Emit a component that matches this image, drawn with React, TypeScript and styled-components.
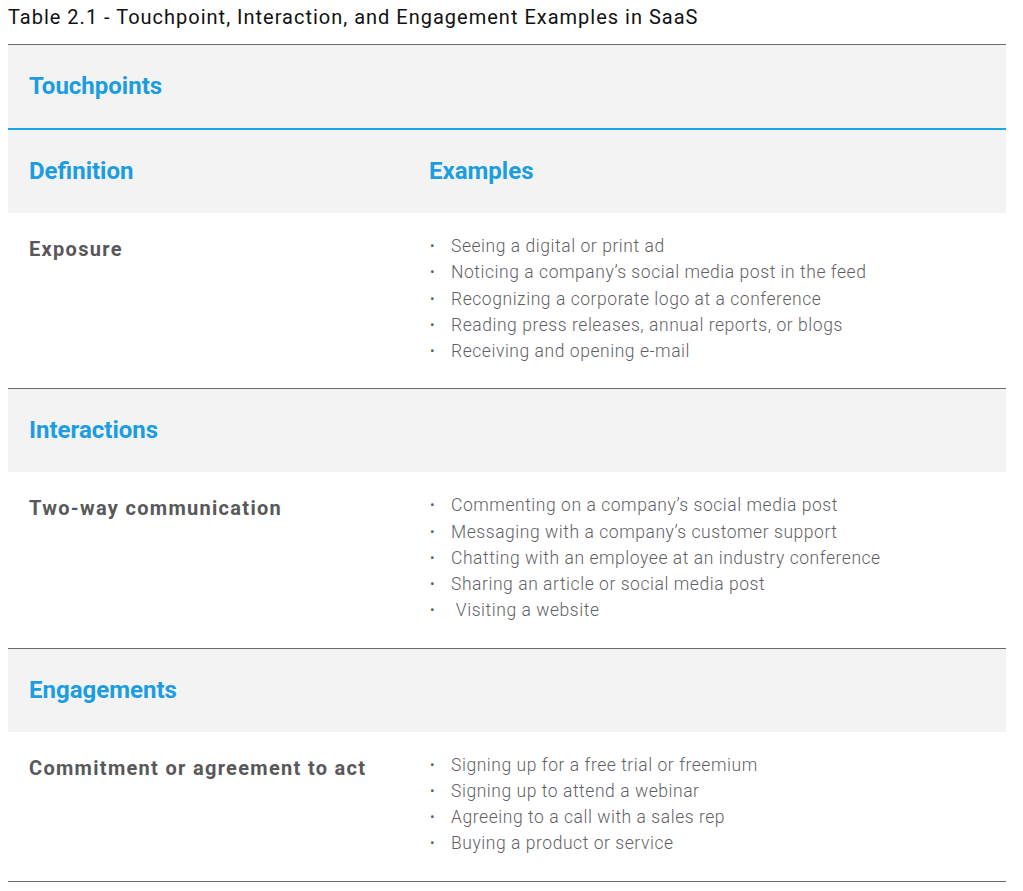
import React from "react";
import styled, { createGlobalStyle } from "styled-components";

const Global = createGlobalStyle`
  html, body { margin: 0; padding: 0; background: #ffffff; }
  body { font-family: Roboto, "Liberation Sans", sans-serif; }
`;

const Page = styled.div`
  padding: 5px 8px 0 8px;
  width: 998px;
`;

const Title = styled.h1`
  margin: 0 0 15px 0;
  font-family: Roboto, "Liberation Sans", sans-serif;
  font-weight: 400;
  font-size: 20px;
  line-height: 24px;
  letter-spacing: 1px;
  color: #111111;
`;

const Table = styled.div`
  display: flex;
  flex-direction: column;
  border-bottom: 1px solid #6a6a6a;
`;

const Section = styled.section`
  border-top: 1px solid #6a6a6a;
`;

const Band = styled.div<{ $accent?: boolean }>`
  display: grid;
  grid-template-columns: 400px 1fr;
  background: #f3f3f3;
  padding: 27px 21px 28px 21px;
  border-bottom: ${(p) => (p.$accent ? "2px solid #1aa7e8" : "none")};
`;

const HeadText = styled.div`
  font-weight: 700;
  font-size: 24px;
  line-height: 28px;
  color: #1b9de0;
`;

const Body = styled.div`
  display: grid;
  grid-template-columns: 400px 1fr;
  padding: 20px 21px 24px 21px;
`;

const Term = styled.div`
  padding-top: 3px;
  font-weight: 700;
  font-size: 20px;
  line-height: 26px;
  color: #58585a;
  letter-spacing: 1.3px;
`;

const List = styled.ul`
  margin: 0;
  padding: 0;
  list-style: none;
`;

const Item = styled.li`
  display: flex;
  font-weight: 300;
  font-size: 17.5px;
  line-height: 26.25px;
  letter-spacing: 0.55px;
  color: #5f5f66;
`;

const Dot = styled.span`
  width: 21px;
  flex: none;
  padding-left: 1px;
  font-size: 14px;
  color: #5a5a5a;
`;

type Group = {
  title: string;
  withColumns?: boolean;
  term: string;
  items: string[];
};

const groups: Group[] = [
  {
    title: "Touchpoints",
    withColumns: true,
    term: "Exposure",
    items: [
      "Seeing a digital or print ad",
      "Noticing a company’s social media post in the feed",
      "Recognizing a corporate logo at a conference",
      "Reading press releases, annual reports, or blogs",
      "Receiving and opening e-mail",
    ],
  },
  {
    title: "Interactions",
    term: "Two-way communication",
    items: [
      "Commenting on a company’s social media post",
      "Messaging with a company’s customer support",
      "Chatting with an employee at an industry conference",
      "Sharing an article or social media post",
      "\u00a0Visiting a website",
    ],
  },
  {
    title: "Engagements",
    term: "Commitment or agreement to act",
    items: [
      "Signing up for a free trial or freemium",
      "Signing up to attend a webinar",
      "Agreeing to a call with a sales rep",
      "Buying a product or service",
    ],
  },
];

export default function App() {
  return (
    <Page>
      <Global />
      <Title>Table 2.1 - Touchpoint, Interaction, and Engagement Examples in SaaS</Title>
      <Table>
        {groups.map((g) => (
          <Section key={g.title}>
            <Band $accent={g.withColumns}>
              <HeadText>{g.title}</HeadText>
            </Band>
            {g.withColumns && (
              <Band>
                <HeadText>Definition</HeadText>
                <HeadText>Examples</HeadText>
              </Band>
            )}
            <Body>
              <Term>{g.term}</Term>
              <List>
                {g.items.map((it) => (
                  <Item key={it}>
                    <Dot>•</Dot>
                    <span>{it}</span>
                  </Item>
                ))}
              </List>
            </Body>
          </Section>
        ))}
      </Table>
    </Page>
  );
}
